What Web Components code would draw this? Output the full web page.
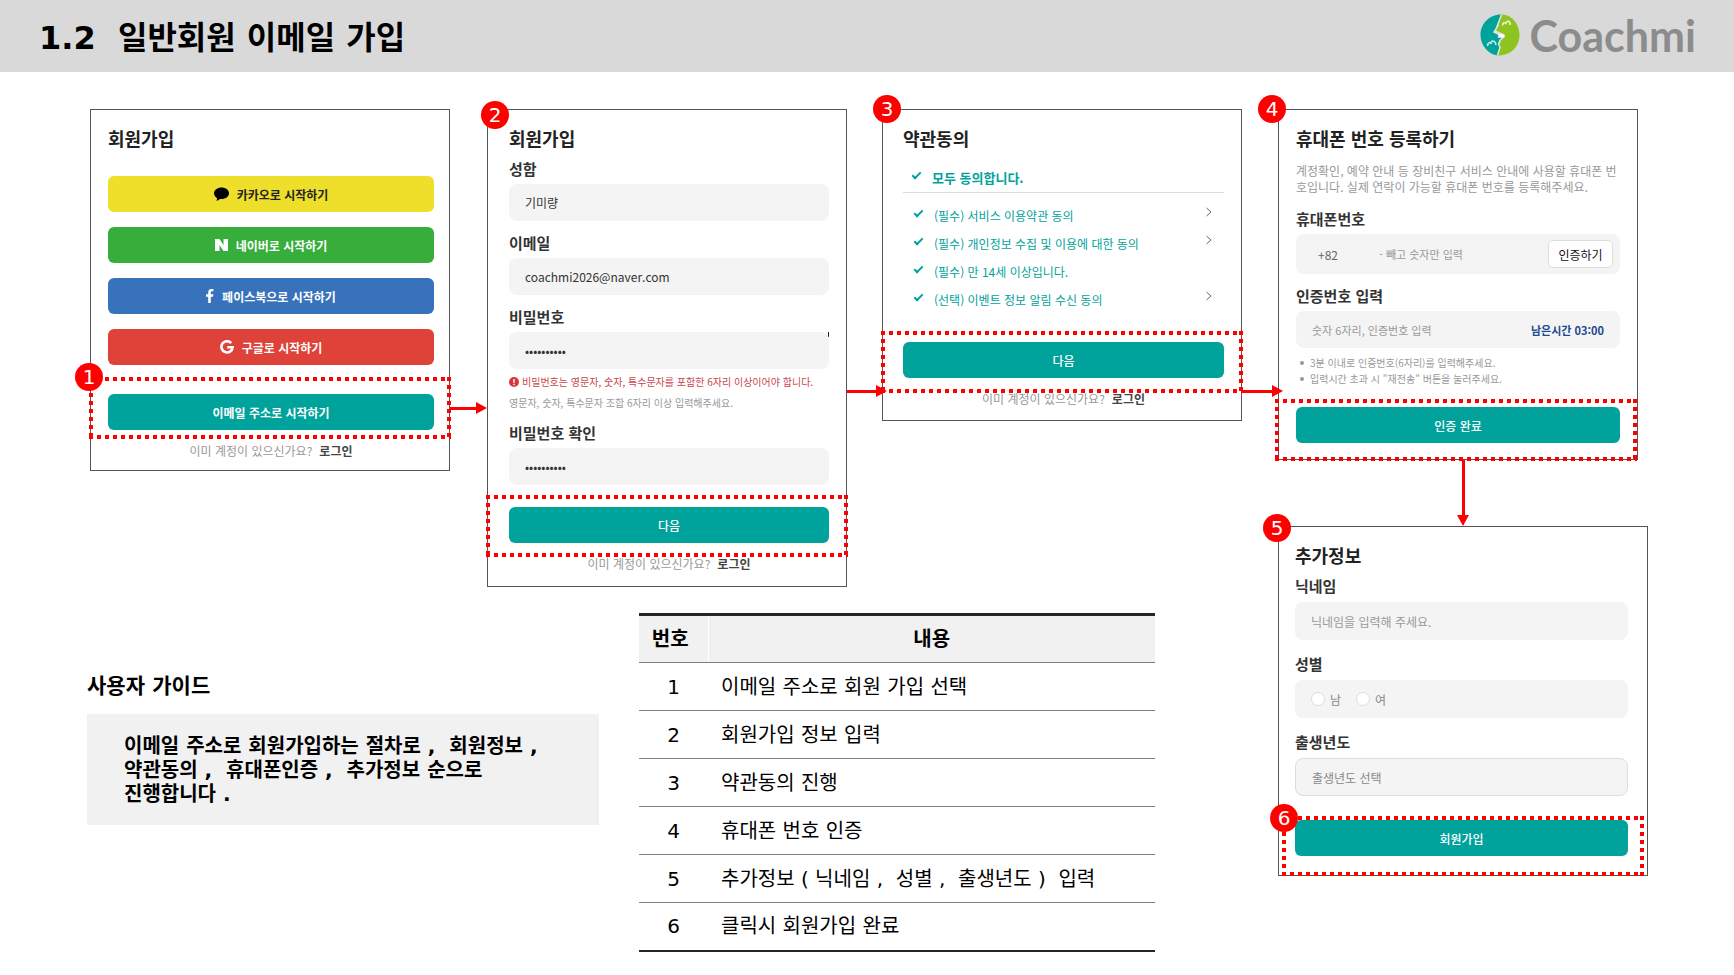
<!DOCTYPE html>
<html lang="ko">
<head>
  <meta charset="UTF-8">
  <meta name="viewport" content="width=device-width, initial-scale=1.0">
  <title>1.2 일반회원 이메일 가입</title>
  <style>
    body {
      margin: 0;
      background: #fff;
      color: #000;
      font-family: "DejaVu Sans", "Noto Sans CJK KR", sans-serif;
    }

    .flow {
      display: grid;
      grid-template-columns: 1fr 37px 1fr 35px 1fr 36px 1fr;
      align-items: start;
      padding: 37px 96px 22px 90px;
    }

    .last-column {
      grid-column: 7;
      grid-row: 1 / span 2;
    }

    .summary {
      grid-column: 1 / span 5;
      display: grid;
      grid-template-columns: 512fr 516fr;
      gap: 40px;
      align-items: start;
      margin: 26px 87px 0 -3px;
    }

    .social {
      display: grid;
      gap: 15px;
      margin: 25px 0 29px;
    }

    .desc {
      margin: 12px 0 13px;
      color: #999;
      font-size: 12px;
      line-height: 16px;
    }

    .tips {
      margin: -4px 0 20px;
      padding: 0 0 0 4px;
      color: #999;
      font-size: 10px;
      line-height: 16px;
      list-style: none;
    }

    .tips li {
      display: flex;
      align-items: center;
      gap: 6px;
    }

    .tips li::before {
      content: "";
      width: 4px;
      height: 4px;
      border-radius: 50%;
      background: #999;
    }

    .arrow-a { margin-top: 293px; }
    .arrow-b { margin: 276px -5px 0 0; }

    #card-email { --card-pad: 15px 15px 10px 17px; }
    #card-info { --card-pad: 15px 17px 13px 21px; }
    #card-terms { --card-pad: 15px 17px 12px 20px; }
    #card-phone { --card-pad: 15px 17px 16px 17px; }
    #card-extra {
      --card-pad: 15px 19px 19px 16px;
      --field-height: 38px;
      --field-gap: 13px;
      --label-gap: 5px;
      margin-right: -10px;
    }

    #card-info { --badge-x: 8px; --badge-y: 6px; }
    #card-terms { --badge-x: 5px; --badge-y: 0px; }
    #card-phone { --badge-x: -6px; --badge-y: 0px; }
    #card-extra { --badge-x: -1px; --badge-y: 2px; }

    #mark-email { --mark: -17px -17px -9px -19px; }
    #mark-info { --mark: -12px -19px -14px -23px; margin-top: 22px; }
    #mark-terms { --mark: -11px -19px -15px -22px; margin-top: 29px; }
    #mark-phone { --mark: -8px -17px -18px -21px; }
    #mark-extra { --mark: -4px -16px -20px -13px; --badge-x: 2px; --badge-y: 2px; margin-top: 24px; }
  </style>
</head>
<body>
  <page-header>1.2&nbsp; 일반회원 이메일 가입</page-header>

  <main class="flow">
    <step-card id="card-email" heading="회원가입">
      <div class="social">
        <action-button variant="kakao">
          <svg slot="icon" width="15" height="14" viewBox="0 0 15 14"><path fill="#000" d="M7.500 0.500C3.400.5 0 3 0 6.300c0 2.100 1.300 3.900 3.200 4.900L2.600 13.600c0 .3.200.4.500.2l3-1.900c.5.100.9.100 1.400.1 4.100 0 7.500-2.500 7.500-5.800S11.600.5 7.500.5z"/></svg>
          카카오로 시작하기
        </action-button>
        <action-button variant="naver">
          <svg slot="icon" width="13" height="12" viewBox="0 0 13 12"><path fill="#fff" d="M0 0h4.500l4 6V0H13v12H8.500l-4-6v6H0z"/></svg>
          네이버로 시작하기
        </action-button>
        <action-button variant="facebook">
          <svg slot="icon" width="8" height="14" viewBox="0 0 8 14"><path fill="#fff" d="M2.200 14V7.800H0V5.300h2.200V3.400C2.200 1.200 3.500 0 5.500 0c.9 0 1.700.1 1.900.1v2.200H6.100c-1 0-1.300.5-1.300 1.300v1.700h2.500L7 7.800H4.800V14z"/></svg>
          페이스북으로 시작하기
        </action-button>
        <action-button variant="google">
          <svg slot="icon" width="14" height="14" viewBox="0 0 14 14"><path fill="none" stroke="#fff" stroke-width="2.600" d="M11.300 3.200A5.600 5.600 0 1 0 12.600 7.300H7.200"/></svg>
          구글로 시작하기
        </action-button>
      </div>
      <highlight-box id="mark-email">
        <action-button variant="strong">이메일 주소로 시작하기</action-button>
        <step-badge slot="badge">1</step-badge>
      </highlight-box>
      <login-hint></login-hint>
    </step-card>

    <flow-arrow class="arrow-a"></flow-arrow>

    <step-card id="card-info" heading="회원가입">
      <step-badge slot="badge">2</step-badge>
      <form-field label="성함" value="기미량"></form-field>
      <form-field label="이메일" type="email" value="coachmi2026@naver.com"></form-field>
      <form-field label="비밀번호" type="password" value="coachmi123" caret>
        <field-note error>비밀번호는 영문자, 숫자, 특수문자를 포함한 6자리 이상이어야 합니다.</field-note>
        <field-note>영문자, 숫자, 특수문자 조합 6자리 이상 입력해주세요.</field-note>
      </form-field>
      <form-field label="비밀번호 확인" type="password" value="coachmi123"></form-field>
      <highlight-box id="mark-info">
        <action-button>다음</action-button>
      </highlight-box>
      <login-hint></login-hint>
    </step-card>

    <flow-arrow class="arrow-b"></flow-arrow>

    <step-card id="card-terms" heading="약관동의">
      <step-badge slot="badge">3</step-badge>
      <terms-list></terms-list>
      <highlight-box id="mark-terms">
        <action-button>다음</action-button>
      </highlight-box>
      <login-hint></login-hint>
    </step-card>

    <flow-arrow class="arrow-b"></flow-arrow>

    <div class="last-column">
      <step-card id="card-phone" heading="휴대폰 번호 등록하기">
        <step-badge slot="badge">4</step-badge>
        <p class="desc">계정확인, 예약 안내 등 장비친구 서비스 안내에 사용할 휴대폰 번<br>호입니다. 실제 연락이 가능할 휴대폰 번호를 등록해주세요.</p>
        <phone-field></phone-field>
        <code-field></code-field>
        <ul class="tips">
          <li>3분 이내로 인증번호(6자리)를 입력해주세요.</li>
          <li>입력시간 초과 시 "재전송" 버튼을 눌러주세요.</li>
        </ul>
        <highlight-box id="mark-phone">
          <action-button>인증 완료</action-button>
        </highlight-box>
      </step-card>

      <flow-arrow down></flow-arrow>

      <step-card id="card-extra" heading="추가정보">
        <step-badge slot="badge">5</step-badge>
        <form-field label="닉네임" placeholder="닉네임을 입력해 주세요."></form-field>
        <gender-field></gender-field>
        <year-field></year-field>
        <highlight-box id="mark-extra">
          <action-button>회원가입</action-button>
          <step-badge slot="badge">6</step-badge>
        </highlight-box>
      </step-card>
    </div>

    <div class="summary">
      <user-guide heading="사용자 가이드">이메일 주소로 회원가입하는 절차로 ,&nbsp; 회원정보 ,<br>약관동의 ,&nbsp; 휴대폰인증 ,&nbsp; 추가정보 순으로<br>진행합니다 .</user-guide>
      <step-table></step-table>
    </div>
  </main>

  <script>
    // Fills an open shadow root with the markup returned by render()
    class BaseElement extends HTMLElement {
      connectedCallback() {
        if (this.shadowRoot) return;
        this.attachShadow({ mode: "open" });
        this.shadowRoot.innerHTML = this.render();
      }

      attr(name, fallback = "") {
        return this.getAttribute(name) || fallback;
      }
    }

    const fieldStyles = `
      :host {
        display: block;
        margin-bottom: var(--field-gap, 11px);
      }

      .label {
        display: block;
        margin-bottom: var(--label-gap, 4px);
        color: #333;
        font-size: 15px;
        font-weight: 700;
        line-height: 22px;
      }

      .box {
        display: flex;
        align-items: center;
        box-sizing: border-box;
        height: var(--field-height, 37px);
        border-radius: 8px;
        background-color: #f4f4f4;
      }

      input, select, button {
        font: inherit;
        font-size: 12px;
      }

      input:not([type="radio"]), select {
        flex: 1;
        box-sizing: border-box;
        min-width: 0;
        height: 100%;
        margin: 0;
        padding: 0 16px;
        border: 0;
        background: none;
        color: #333;
        appearance: none;
      }

      input::placeholder {
        color: #999;
        opacity: 1;
      }
    `;

    class PageHeader extends BaseElement {
      render() {
        return `
          <style>
            :host {
              display: block;
              background: #d9d9d9;
            }

            header {
              display: flex;
              align-items: center;
              justify-content: space-between;
              height: 72px;
              padding: 0 38px 0 39px;
            }

            h1 {
              margin: 0;
              padding-top: 4px;
              font-size: 32px;
              font-weight: 700;
              line-height: 40px;
            }
          </style>
          <header>
            <h1><slot></slot></h1>
            <coachmi-logo></coachmi-logo>
          </header>
        `;
      }
    }

    class CoachmiLogo extends BaseElement {
      render() {
        return `
          <style>
            :host {
              display: flex;
              align-items: center;
              gap: 10px;
              color: #8c8c8c;
              font-family: Lato, sans-serif;
              font-size: 43px;
              font-weight: 700;
              line-height: 48px;
            }

            svg {
              margin-bottom: 3px;
            }
          </style>
          <svg width="40" height="42" viewBox="0 0 40 42">
            <path fill="#00a39b" d="M21 0.500C9 .5.500 10 .5 21S9 40.500 17.500 41.500l3-9-2-3 2-3 5-1-7-5-5-2 5-9z"/>
            <path fill="#8fc31f" d="M21 0.500h1C32 1 39.500 10 39.500 21S31.500 41.500 18 41.500l2.500-8-1.500-3 2-3-.5-2 4-2.500-.5-3-5.500-2.500-3-1.500 3.500-4.500-.5-4z"/>
            <path fill="none" stroke="#dfe9e9" stroke-width="1.400" d="M21.500.8l-5.500 14.200-2 3 5 2.500-.5 2.500 5 .2-3.500 3-1.500 4 1.500 3-2.500 8"/>
            <path fill="#fff" d="M18.500 19.500l6.500 1.200-1.500 3-4.500-1z"/>
            <path fill="none" stroke="#e8f3d0" stroke-width="1.700" d="M22.500 11.500c.3-3.500 2.800-3.800 3.800-1.200M26.300 8.500c1.800-2.500 4.200-1 4 2.500"/>
            <path fill="none" stroke="#c4e8e6" stroke-width="1.700" d="M7.500 32c.3-4 2.800-4 4-2M11 28c2.200-2 5-.5 4.800 3"/>
          </svg>
          <span>Coachmi</span>
        `;
      }
    }

    class StepCard extends BaseElement {
      render() {
        return `
          <style>
            :host {
              display: block;
              position: relative;
              font-family: "Noto Sans CJK KR", sans-serif;
            }

            section {
              padding: var(--card-pad, 15px);
              border: 1px solid #555;
              background: #fff;
            }

            h2 {
              margin: 0 0 7px;
              color: #222;
              font-size: 18px;
              font-weight: 700;
              line-height: 26px;
            }
          </style>
          <section>
            <h2>${this.attr("heading")}</h2>
            <slot></slot>
          </section>
          <slot name="badge"></slot>
        `;
      }
    }

    // Numbered red circle, centred on --badge-x / --badge-y of its holder
    class StepBadge extends BaseElement {
      render() {
        return `
          <style>
            :host {
              position: absolute;
              z-index: 2;
              left: var(--badge-x, 0px);
              top: var(--badge-y, 0px);
              width: 28px;
              height: 28px;
              margin: -14px 0 0 -14px;
              border-radius: 50%;
              background: #f00;
              color: #fff;
              font-family: "DejaVu Sans", sans-serif;
              font-size: 20px;
              line-height: 28px;
              text-align: center;
            }
          </style>
          <slot></slot>
        `;
      }
    }

    class HighlightBox extends BaseElement {
      render() {
        return `
          <style>
            :host {
              display: block;
              position: relative;
            }

            .frame {
              position: absolute;
              z-index: 1;
              inset: var(--mark, 0px);
              pointer-events: none;
            }

            svg {
              display: block;
              width: 100%;
              height: 100%;
            }

            line {
              stroke: #f00;
              stroke-width: 8;
              stroke-dasharray: 4 4;
            }
          </style>
          <slot></slot>
          <div class="frame">
            <svg>
              <line x1="0" y1="0" x2="100%" y2="0"/>
              <line x1="0" y1="100%" x2="100%" y2="100%"/>
              <line x1="0" y1="0" x2="0" y2="100%"/>
              <line x1="100%" y1="0" x2="100%" y2="100%"/>
            </svg>
            <slot name="badge"></slot>
          </div>
        `;
      }
    }

    class ActionButton extends BaseElement {
      render() {
        return `
          <style>
            :host {
              display: block;
            }

            button {
              display: flex;
              align-items: center;
              justify-content: center;
              gap: 8px;
              width: 100%;
              height: 36px;
              padding: 0;
              border: 0;
              border-radius: 6px;
              background: #00a39b;
              color: #fff;
              font: inherit;
              font-size: 12px;
              font-weight: 500;
              cursor: pointer;
            }

            :host([variant]) button { font-weight: 700; }
            :host([variant="kakao"]) button { background: #eedf2b; color: #222; }
            :host([variant="naver"]) button { background: #37ae3b; }
            :host([variant="facebook"]) button { background: #3772bb; }
            :host([variant="google"]) button { background: #de4238; }
          </style>
          <button type="button"><slot name="icon"></slot><span><slot></slot></span></button>
        `;
      }
    }

    class LoginHint extends BaseElement {
      render() {
        return `
          <style>
            :host {
              display: flex;
              justify-content: center;
              gap: 7px;
              margin-top: 12px;
              color: #999;
              font-size: 12px;
              line-height: 18px;
            }

            a {
              color: #444;
              font-weight: 700;
              text-decoration: none;
            }
          </style>
          <span>이미 계정이 있으신가요?</span>
          <a href="#login">로그인</a>
        `;
      }
    }

    class FormField extends BaseElement {
      render() {
        return `
          <style>
            ${fieldStyles}

            :host([caret]) .wrap {
              background: linear-gradient(#222, #222) right top / 1px 5px no-repeat;
            }
          </style>
          <label class="label" for="input">${this.attr("label")}</label>
          <div class="wrap">
            <div class="box">
              <input id="input" type="${this.attr("type", "text")}" value="${this.attr("value")}" placeholder="${this.attr("placeholder")}">
            </div>
          </div>
          <slot></slot>
        `;
      }
    }

    class FieldNote extends BaseElement {
      render() {
        const icon = `<svg width="10" height="10" viewBox="0 0 10 10"><circle cx="5" cy="5" r="5" fill="#d8363f"/><path stroke="#fff" stroke-width="1.400" d="M5 2v3.800M5 6.800v1.400"/></svg>`;
        return `
          <style>
            :host {
              display: flex;
              align-items: center;
              gap: 3px;
              margin-top: 5px;
              color: #999;
              font-size: 10px;
              line-height: 16px;
              white-space: nowrap;
            }

            :host([error]) {
              color: #c9454c;
            }
          </style>
          ${this.hasAttribute("error") ? icon : ""}<span><slot></slot></span>
        `;
      }
    }

    class TermsList extends BaseElement {
      render() {
        const terms = [
          ["(필수) 서비스 이용약관 동의", true],
          ["(필수) 개인정보 수집 및 이용에 대한 동의", true],
          ["(필수) 만 14세 이상입니다.", false],
          ["(선택) 이벤트 정보 알림 수신 동의", true],
        ];
        const items = terms.map(([text, more], i) => `
          <li>
            <input type="checkbox" id="term-${i}" checked>
            <label for="term-${i}">${text}</label>
            ${more ? `<a href="#term-${i}" aria-label="${text}"><svg width="6" height="10" viewBox="0 0 6 10"><path fill="none" stroke="#666" d="M.5 1l4.500 4-4.500 4"/></svg></a>` : ""}
          </li>
        `).join("");
        return `
          <style>
            :host {
              display: block;
              margin-top: 16px;
              color: #00a39b;
              font-size: 12px;
            }

            .all, li {
              display: flex;
              align-items: center;
            }

            .all {
              height: 20px;
              padding: 0 0 5px 8px;
              border-bottom: 1px solid #ddd;
              font-size: 13px;
              font-weight: 700;
            }

            ul {
              margin: 8px 0 0;
              padding: 0 12px 0 10px;
              list-style: none;
            }

            li {
              height: 28px;
            }

            label {
              flex: 1;
              margin-left: 11px;
            }

            input {
              display: grid;
              place-items: center;
              width: 10px;
              height: 10px;
              margin: 0;
              appearance: none;
            }

            input:checked::before {
              content: "";
              width: 7px;
              height: 3px;
              border: solid #00a39b;
              border-width: 0 0 2px 2px;
              transform: translateY(-3px) rotate(-45deg);
            }

            a {
              display: flex;
              padding-bottom: 6px;
            }
          </style>
          <div class="all">
            <input type="checkbox" id="all" checked>
            <label for="all">모두 동의합니다.</label>
          </div>
          <ul>${items}</ul>
        `;
      }
    }

    class PhoneField extends BaseElement {
      render() {
        return `
          <style>
            ${fieldStyles}

            .box {
              height: 40px;
              padding-right: 7px;
            }

            .box select {
              flex: 0 0 83px;
              padding: 0 0 0 22px;
              font-size: 12px;
              color: #666;
            }

            .box input {
              padding: 0;
              font-size: 11px;
            }

            button {
              width: 65px;
              height: 28px;
              padding: 0;
              border: 1px solid #ddd;
              border-radius: 5px;
              background: #fff;
              color: #111;
            }
          </style>
          <label class="label" for="phone">휴대폰번호</label>
          <div class="box">
            <select aria-label="국가번호"><option>+82</option></select>
            <input id="phone" type="tel" placeholder="- 빼고 숫자만 입력">
            <button type="button">인증하기</button>
          </div>
        `;
      }
    }

    class CodeField extends BaseElement {
      render() {
        return `
          <style>
            ${fieldStyles}

            .box input {
              font-size: 11px;
            }

            .time {
              margin-right: 16px;
              color: #1b4a8f;
              font-size: 11px;
              font-weight: 700;
            }
          </style>
          <label class="label" for="code">인증번호 입력</label>
          <div class="box">
            <input id="code" type="text" placeholder="숫자 6자리, 인증번호 입력">
            <span class="time">남은시간 03:00</span>
          </div>
        `;
      }
    }

    class GenderField extends BaseElement {
      render() {
        return `
          <style>
            ${fieldStyles}

            .box {
              gap: 15px;
              padding: 0 16px;
              color: #888;
              font-size: 12px;
            }

            .box label {
              display: flex;
              align-items: center;
              gap: 5px;
            }

            input {
              box-sizing: border-box;
              width: 14px;
              height: 14px;
              margin: 0;
              border: 1px solid #ddd;
              border-radius: 50%;
              background: #fff;
              appearance: none;
            }
          </style>
          <span class="label" id="gender">성별</span>
          <div class="box" role="radiogroup" aria-labelledby="gender">
            <label><input type="radio" name="gender">남</label>
            <label><input type="radio" name="gender">여</label>
          </div>
        `;
      }
    }

    class YearField extends BaseElement {
      render() {
        return `
          <style>
            ${fieldStyles}

            .box {
              border: 1px solid #ddd;
            }

            .box select {
              color: #888;
            }
          </style>
          <label class="label" for="year">출생년도</label>
          <div class="box">
            <select id="year"><option>출생년도 선택</option></select>
          </div>
        `;
      }
    }

    class FlowArrow extends BaseElement {
      render() {
        return `
          <style>
            :host {
              display: flex;
              align-items: center;
              position: relative;
              z-index: 1;
            }

            .line {
              flex: 1;
              height: 3px;
              background: #f00;
            }

            .head {
              border: solid transparent;
              border-width: 6px 0 6px 11px;
              border-left-color: #f00;
            }

            :host([down]) {
              flex-direction: column;
              height: 66px;
              margin-right: -10px;
            }

            :host([down]) .line {
              width: 3px;
            }

            :host([down]) .head {
              border-width: 11px 6px 0;
              border-color: #f00 transparent transparent;
            }
          </style>
          <div class="line"></div>
          <div class="head"></div>
        `;
      }
    }

    class UserGuide extends BaseElement {
      render() {
        return `
          <style>
            :host {
              display: block;
              margin-top: 58px;
              font-weight: 700;
            }

            h2 {
              margin: 0 0 13px;
              font-size: 21px;
              line-height: 30px;
            }

            p {
              margin: 0;
              padding: 20px 37px 19px;
              background: #f1f1f1;
              font-size: 20px;
              line-height: 24px;
            }
          </style>
          <h2>${this.attr("heading")}</h2>
          <p><slot></slot></p>
        `;
      }
    }

    class StepTable extends BaseElement {
      render() {
        const steps = [
          "이메일 주소로 회원 가입 선택",
          "회원가입 정보 입력",
          "약관동의 진행",
          "휴대폰 번호 인증",
          "추가정보 ( 닉네임 ,&nbsp; 성별 ,&nbsp; 출생년도 )&nbsp; 입력",
          "클릭시 회원가입 완료",
        ];
        return `
          <style>
            :host {
              display: block;
            }

            table {
              width: 100%;
              border-collapse: collapse;
              border-top: 3px solid #262626;
              border-bottom: 2px solid #262626;
              font-size: 20px;
              line-height: 24px;
            }

            th {
              background: #f1f1f1;
              border-bottom: 1px solid #7f7f7f;
            }

            th:first-child {
              width: 69px;
              padding-right: 6px;
              border-right: 1px solid #fff;
            }

            th, td {
              box-sizing: border-box;
              height: 48px;
              padding: 0;
            }

            td {
              padding-left: 13px;
              border-bottom: 1px solid #7f7f7f;
            }

            td:first-child {
              padding: 0;
              text-align: center;
            }

            tr:last-child td {
              border-bottom: 0;
            }
          </style>
          <table>
            <thead>
              <tr><th scope="col">번호</th><th scope="col">내용</th></tr>
            </thead>
            <tbody>
              ${steps.map((step, i) => `<tr><td>${i + 1}</td><td>${step}</td></tr>`).join("")}
            </tbody>
          </table>
        `;
      }
    }

    customElements.define("page-header", PageHeader);
    customElements.define("coachmi-logo", CoachmiLogo);
    customElements.define("step-card", StepCard);
    customElements.define("step-badge", StepBadge);
    customElements.define("highlight-box", HighlightBox);
    customElements.define("action-button", ActionButton);
    customElements.define("login-hint", LoginHint);
    customElements.define("form-field", FormField);
    customElements.define("field-note", FieldNote);
    customElements.define("terms-list", TermsList);
    customElements.define("phone-field", PhoneField);
    customElements.define("code-field", CodeField);
    customElements.define("gender-field", GenderField);
    customElements.define("year-field", YearField);
    customElements.define("flow-arrow", FlowArrow);
    customElements.define("user-guide", UserGuide);
    customElements.define("step-table", StepTable);
  </script>
</body>
</html>
